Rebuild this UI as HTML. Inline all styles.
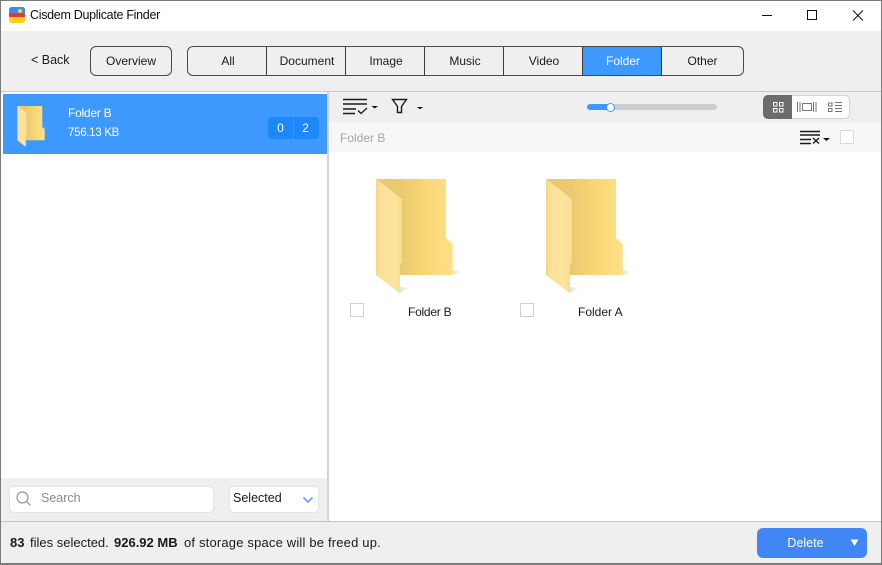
<!DOCTYPE html>
<html><head><meta charset="utf-8"><title>Cisdem Duplicate Finder</title>
<style>
*{box-sizing:border-box}
html,body{margin:0;padding:0;width:882px;height:565px;overflow:hidden;background:#fff}
body{font-family:"Liberation Sans",sans-serif;font-size:12px;color:#1a1a1a;position:relative}
.a{position:absolute;white-space:nowrap}
.c{text-align:center}
.tab{position:absolute;top:0;height:29px;line-height:29px;text-align:center;border-right:1px solid #3a3a3a;font-size:12px;padding-left:2px}
</style></head><body>
<svg width="0" height="0" style="position:absolute"><defs>
<linearGradient id="g1" x1="0" x2="1" y1="0" y2="0"><stop offset=".33" stop-color="#ebc96f"/><stop offset=".62" stop-color="#f8d675"/><stop offset="1" stop-color="#fee086"/></linearGradient>
<linearGradient id="g2" x1="0" x2="1" y1="0" y2="0"><stop offset="0" stop-color="#f6d484"/><stop offset=".14" stop-color="#fce098"/><stop offset=".7" stop-color="#fde49e"/><stop offset="1" stop-color="#f9dc8e"/></linearGradient>
<linearGradient id="g3" x1="0" x2="1" y1="0" y2="0"><stop offset="0" stop-color="#e2e2e2"/><stop offset="1" stop-color="#fff"/></linearGradient>
<symbol id="folder" viewBox="0 0 88 115" overflow="visible">
<path d="M76.700 91L86 93L76.700 96Z" fill="url(#g3)"/>
<path d="M24 114L24 108L34 109Z" fill="url(#g3)"/>
<path d="M0 0H69Q70 0 70 1V59L76.700 65V96H24V86Z" fill="url(#g1)"/>
<path d="M0 0L26 20V83L24 86V114.500L0 96Z" fill="url(#g2)"/>
</symbol>
<symbol id="folders" viewBox="0 0 88 115" overflow="visible">
<path d="M0 0H69Q70 0 70 1V59L76.700 65V96H24V86Z" fill="url(#g1)"/>
<path d="M0 0L26 20V83L24 86V114.500L0 96Z" fill="url(#g2)"/>
</symbol>
</defs></svg>

<!-- title bar -->
<div class="a" style="left:0;top:0;width:882px;height:565px;border:1px solid #7b7b7b;border-bottom-width:2px;z-index:9;pointer-events:none"></div>
<svg class="a" style="left:9px;top:7px" width="16" height="16" viewBox="0 0 16 16">
<defs><clipPath id="ic"><rect width="16" height="16" rx="2.500"/></clipPath></defs>
<g clip-path="url(#ic)"><rect width="16" height="16" fill="#ffd20a"/><rect width="16" height="6" fill="#3e8ee8"/><rect y="6" width="16" height="4" fill="#e8452f"/><path d="M0 7Q8 5 16 9V10H0Z" fill="#e0383a"/><circle cx="11" cy="4" r="2" fill="#ffcf3a"/></g></svg>
<div class="a" style="left:30px;top:8px;font-size:12.500px;line-height:15px;color:#111;letter-spacing:-.3px">Cisdem Duplicate Finder</div>
<svg class="a" style="left:760px;top:8px" width="110" height="14" viewBox="0 0 110 14" fill="none" stroke="#111" stroke-width="1"><path d="M2 7.500H12"/><rect x="47.500" y="2.500" width="9" height="9"/><path d="M93 2.500L103 12.500M103 2.500L93 12.500"/></svg>

<!-- toolbar -->
<div class="a" style="left:1px;top:31px;width:880px;height:60px;background:#efefef"></div>
<div class="a" style="left:1px;top:91px;width:880px;height:1px;background:#c9c9c9"></div>
<div class="a" style="left:31px;top:53px;font-size:12.500px;line-height:15px">&lt; Back</div>
<div class="a c" style="left:90px;top:46px;width:82px;height:30px;border:1px solid #4a4a4a;border-radius:6px;line-height:29px">Overview</div>
<div class="a" style="left:187px;top:46px;width:557px;height:30px;border:1px solid #4a4a4a;border-radius:6px;overflow:hidden">
<div class="tab" style="left:0;width:79px">All</div>
<div class="tab" style="left:79px;width:79px">Document</div>
<div class="tab" style="left:158px;width:79px">Image</div>
<div class="tab" style="left:237px;width:79px">Music</div>
<div class="tab" style="left:316px;width:79px">Video</div>
<div class="tab" style="left:395px;width:79px;background:#3d99fd;color:#fff">Folder</div>
<div class="tab" style="left:474px;width:81px;border:0;padding:0">Other</div>
</div>

<!-- left panel -->
<div class="a" style="left:327px;top:92px;width:2px;height:429px;background:#d4d4d4"></div>
<div class="a" style="left:3px;top:94px;width:324px;height:60px;background:#3d99fd"></div>
<svg class="a" style="left:17px;top:106px;overflow:visible" width="32" height="41"><use href="#folders" width="32" height="41"/></svg>
<div class="a" style="left:68px;top:106px;color:#fff;line-height:14px;letter-spacing:-.25px">Folder B</div>
<div class="a" style="left:68px;top:126px;color:#fff;line-height:14px;font-size:11.500px;letter-spacing:-.3px">756.13 KB</div>
<div class="a" style="left:268px;top:117px;width:51px;height:22px;background:#1c88fb;border-radius:4px"></div>
<div class="a" style="left:293px;top:117px;width:1px;height:22px;background:#3d99fd"></div>
<div class="a c" style="left:268px;top:117px;width:25px;line-height:23px;color:#fff">0</div>
<div class="a c" style="left:293px;top:117px;width:25px;line-height:23px;color:#fff">2</div>

<div class="a" style="left:1px;top:478px;width:326px;height:43px;background:#efefef"></div>
<div class="a" style="left:9px;top:486px;width:205px;height:27px;background:#fff;border:1px solid #e3e3e3;border-radius:5px"></div>
<svg class="a" style="left:15px;top:490px" width="18" height="18" viewBox="0 0 18 18" fill="none" stroke="#969696" stroke-width="1.200"><circle cx="7.500" cy="7.500" r="5.500"/><path d="M11.500 11.500L15.500 15.500"/></svg>
<div class="a" style="left:41px;top:491px;line-height:15px;color:#8a8a8a;font-size:12.500px">Search</div>
<div class="a" style="left:229px;top:486px;width:90px;height:27px;background:#fff;border:1px solid #e3e3e3;border-radius:5px"></div>
<div class="a" style="left:233px;top:491px;line-height:15px;font-size:12.500px">Selected</div>
<svg class="a" style="left:302px;top:496px" width="12" height="8" viewBox="0 0 12 8" fill="none" stroke="#5ea6f2" stroke-width="1.700"><path d="M1.500 1.500L6 6L10.500 1.500"/></svg>

<!-- right toolbar -->
<div class="a" style="left:329px;top:92px;width:552px;height:30px;background:#efefef"></div>
<div class="a" style="left:329px;top:122px;width:552px;height:30px;background:#f7f7f7"></div>
<svg class="a" style="left:343px;top:98px" width="40" height="18" viewBox="0 0 40 18" fill="none" stroke="#1a1a1a" stroke-width="1.500"><path d="M0 1.500H24M0 6H24M0 11H13M0 15.500H12"/><path d="M15 12.500L18 15.500L24 10" stroke-width="1.300"/><path d="M28.500 8H35L31.700 10.500Z" fill="#111" stroke="none"/></svg>
<svg class="a" style="left:391px;top:98px" width="36" height="18" viewBox="0 0 36 18" fill="none" stroke="#1a1a1a" stroke-width="1.400"><path d="M1.500 1.500H15.500L10.500 8.500V14.500H6.500V8.500Z"/><path d="M26 9H32L29 11.300Z" fill="#111" stroke="none"/></svg>
<div class="a" style="left:587px;top:104px;width:130px;height:6px;background:#cdcdcd;border-radius:3px"></div>
<div class="a" style="left:587px;top:104px;width:23px;height:6px;background:#3d99fd;border-radius:3px"></div>
<div class="a" style="left:606px;top:103px;width:9px;height:9px;background:#fff;border:1.500px solid #3d99fd;border-radius:50%"></div>
<div class="a" style="left:763px;top:95px;width:87px;height:24px;background:#fff;border:1px solid #d4d4d4;border-radius:5px"></div>
<div class="a" style="left:763px;top:95px;width:29px;height:24px;background:#6c6c6c;border-radius:5px 0 0 5px"></div>
<svg class="a" style="left:763px;top:95px" width="87" height="24" viewBox="0 0 87 24" fill="none">
<g stroke="#fff"><rect x="10.500" y="7.500" width="3.500" height="3.500"/><rect x="16.500" y="7.500" width="3.500" height="3.500"/><rect x="10.500" y="13.500" width="3.500" height="3.500"/><rect x="16.500" y="13.500" width="3.500" height="3.500"/></g>
<g stroke="#777"><rect x="39.500" y="8.500" width="9" height="7"/><path d="M34.500 7V17M37 7V17M50.500 7V17M53 7V17"/></g>
<g stroke="#777"><rect x="65.500" y="8" width="3.500" height="3"/><rect x="65.500" y="13.500" width="3.500" height="3"/><path d="M72 7.500H79M72 10.500H79M72 13.500H79M72 16.500H79"/></g></svg>
<div class="a" style="left:340px;top:131px;line-height:14px;color:#a5a5a5">Folder B</div>
<svg class="a" style="left:800px;top:130px" width="32" height="16" viewBox="0 0 32 16" fill="none" stroke="#1a1a1a" stroke-width="1.400"><path d="M0 1.500H20M0 5H20M0 9.500H11M0 13.500H11"/><path d="M13 8L19 13.500M19 8L13 13.500"/><path d="M23 8H30L26.500 11Z" fill="#111" stroke="none"/></svg>
<div class="a" style="left:840px;top:130px;width:14px;height:14px;background:#fff;border:1px solid #dcdcdc"></div>

<!-- folders -->
<svg class="a" style="left:376px;top:179px;overflow:visible" width="88" height="115"><use href="#folder" width="88" height="115"/></svg>
<svg class="a" style="left:546px;top:179px;overflow:visible" width="88" height="115"><use href="#folder" width="88" height="115"/></svg>
<div class="a" style="left:350px;top:303px;width:14px;height:14px;background:#fff;border:1px solid #d0d0d0"></div>
<div class="a" style="left:520px;top:303px;width:14px;height:14px;background:#fff;border:1px solid #d0d0d0"></div>
<div class="a" style="left:408px;top:305px;line-height:14px;letter-spacing:-.25px">Folder B</div>
<div class="a" style="left:578px;top:305px;line-height:14px">Folder A</div>

<!-- status bar -->
<div class="a" style="left:1px;top:521px;width:880px;height:43px;background:#efefef;border-top:1px solid #c4c4c4"></div>
<div class="a" style="left:10px;top:535px;line-height:15px;font-size:13px"><b>83</b></div>
<div class="a" style="left:30px;top:535px;line-height:15px;font-size:13px">files selected.</div>
<div class="a" style="left:114px;top:535px;line-height:15px;font-size:13px"><b>926.92 MB</b></div>
<div class="a" style="left:184px;top:535px;line-height:15px;font-size:13px;letter-spacing:.18px">of storage space will be freed up.</div>
<div class="a" style="left:757px;top:528px;width:110px;height:30px;background:#4087f5;border-radius:6px"></div>
<div class="a c" style="left:757px;top:528px;width:97px;line-height:30px;color:#fff;font-size:12.500px">Delete</div>
<svg class="a" style="left:850px;top:539px" width="10" height="8" viewBox="0 0 10 8"><path d="M0.500 0.500H8.500L4.500 7Z" fill="#fff"/></svg>
</body></html>
